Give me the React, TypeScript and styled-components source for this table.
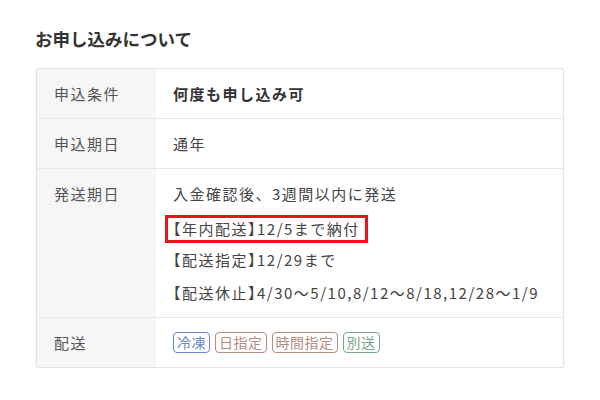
import React from 'react'
import styled, { createGlobalStyle } from 'styled-components'

const GlobalStyle = createGlobalStyle`
  body {
    margin: 0;
    background: #fff;
    font-family: "Noto Sans CJK JP", "Noto Sans", sans-serif;
    color: #444;
  }
`

const Page = styled.div`
  padding: 26px 37px 0 36px;
  width: 528px;
`

const Title = styled.h2`
  margin: 0 0 17px -1px;
  font-size: 17.5px;
  line-height: 25px;
  font-weight: 700;
  color: #333;
`

const Table = styled.div`
  border: 1px solid #e3e3e3;
  border-radius: 2px;
  box-shadow: 0 1px 2px rgba(0, 0, 0, 0.08);
`

const Row = styled.div`
  display: grid;
  grid-template-columns: 119px 1fr;
  & + & {
    border-top: 1px solid #e8e8e8;
  }
`

const Label = styled.div`
  background: #f6f6f6;
  padding: 8px 17px;
  font-size: 15px;
  line-height: 33px;
  letter-spacing: 1.5px;
  color: #555;
`

const Value = styled.div<{ $bold?: boolean }>`
  padding: 8px 17px;
  font-size: 15px;
  line-height: 33px;
  letter-spacing: 1.5px;
  font-weight: ${({ $bold }) => ($bold ? 700 : 400)};
  color: ${({ $bold }) => ($bold ? '#333' : '#444')};
`

const Line = styled.div`
  height: 33px;
  white-space: nowrap;
`

// bracketed heading, tight punctuation like the reference
const Note = styled.span`
  font-feature-settings: "halt";
`

const Highlight = styled.span`
  display: inline-block;
  margin-left: -8px;
  padding: 0 5px 0 5px;
  line-height: 22px;
  border: 3px solid #e8141b;
  vertical-align: middle;
`

const Tags = styled.div`
  display: flex;
  align-items: center;
  gap: 5px;
  height: 33px;
`

type Tone = 'blue' | 'brown' | 'green'

const toneColor: Record<Tone, string> = {
  blue: '#6a87c4',
  brown: '#b48c82',
  green: '#76a887'
}

const Tag = styled.span<{ $tone: Tone }>`
  display: inline-block;
  padding: 0 3px;
  font-size: 14px;
  line-height: 19px;
  letter-spacing: 0.5px;
  border: 1.5px solid ${({ $tone }) => toneColor[$tone]};
  color: ${({ $tone }) => toneColor[$tone]};
  border-radius: 4px;
`

const tags: Array<{ text: string; tone: Tone }> = [
  { text: '冷凍', tone: 'blue' },
  { text: '日指定', tone: 'brown' },
  { text: '時間指定', tone: 'brown' },
  { text: '別送', tone: 'green' }
]

const App: React.FC = () => (
  <>
    <GlobalStyle />
    <Page>
      <Title>お申し込みについて</Title>
      <Table>
        <Row>
          <Label>申込条件</Label>
          <Value $bold>何度も申し込み可</Value>
        </Row>
        <Row>
          <Label>申込期日</Label>
          <Value>通年</Value>
        </Row>
        <Row>
          <Label>発送期日</Label>
          <Value>
            <Line>入金確認後、3週間以内に発送</Line>
            <Line>
              <Highlight>
                <Note>【年内配送】</Note>12/5まで納付
              </Highlight>
            </Line>
            <Line>
              <Note>【配送指定】</Note>12/29まで
            </Line>
            <Line>
              <Note>【配送休止】</Note>4/30～5/10,8/12～8/18,12/28～1/9
            </Line>
          </Value>
        </Row>
        <Row>
          <Label>配送</Label>
          <Value>
            <Tags>
              {tags.map(t => (
                <Tag key={t.text} $tone={t.tone}>
                  {t.text}
                </Tag>
              ))}
            </Tags>
          </Value>
        </Row>
      </Table>
    </Page>
  </>
)

export default App
